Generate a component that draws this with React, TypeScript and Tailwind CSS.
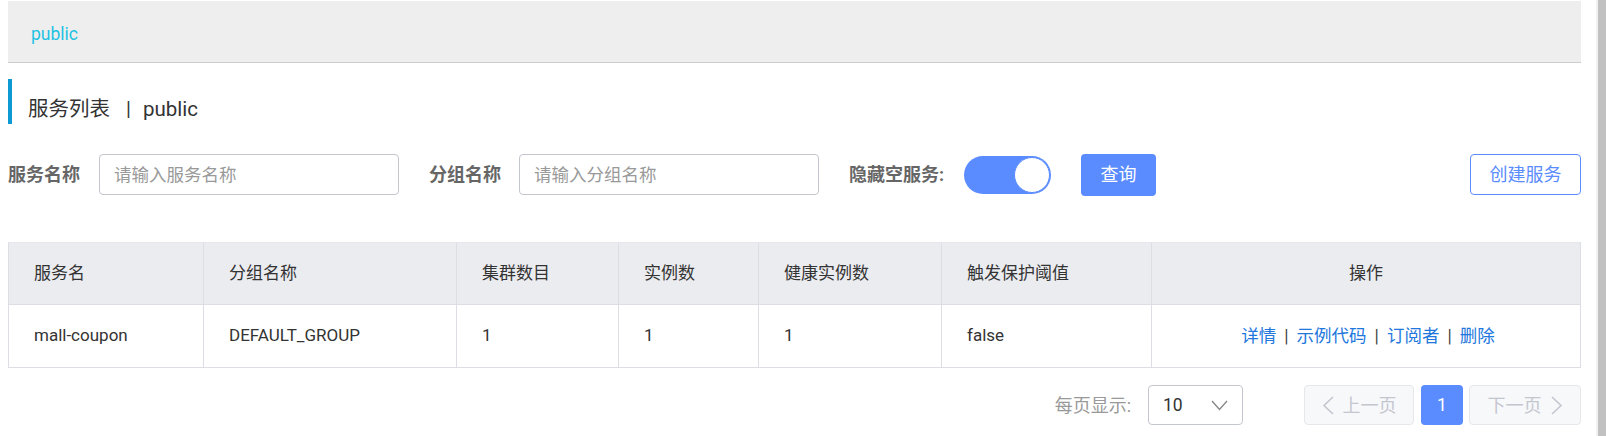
const font = { fontFamily: 'Roboto, "Noto Sans CJK SC", sans-serif' };

const columns = ["服务名", "分组名称", "集群数目", "实例数", "健康实例数", "触发保护阈值", "操作"];
const row = ["mall-coupon", "DEFAULT_GROUP", "1", "1", "1", "false"];

function Chevron({ dir }: { dir: "left" | "right" }) {
  return (
    <svg width="13" height="19" viewBox="0 0 13 19" fill="none">
      <polyline
        points={dir === "left" ? "11,1 2,9.5 11,18" : "2,1 11,9.5 2,18"}
        stroke="currentColor"
        strokeWidth="1.6"
      />
    </svg>
  );
}

export default function App() {
  return (
    <div className="flex w-[1606px] h-[436px] overflow-hidden bg-white text-[#333]" style={font}>
      <div className="flex-1 flex flex-col pl-[8px] pr-[15px]">
        <div className="mt-[1px] h-[62px] flex items-center pt-[6px] pl-[23px] bg-[#eeeeee] border-b border-[#cccccc]">
          <span className="text-[17.5px] text-[#1fc2e2]">public</span>
        </div>

        <div className="mt-[16px] h-[45px] flex items-center pt-[14px] pl-[16px] border-l-4 border-[#0e9bd3]">
          <span className="text-[20.5px] leading-[28px] text-[#333]">服务列表</span>
          <span className="ml-[16px] text-[20px] leading-[28px] text-[#333]">|</span>
          <span className="ml-[12px] text-[20.5px] leading-[28px] text-[#333]">public</span>
        </div>

        <div className="mt-[30px] h-[41px] flex items-center">
          <span className="text-[18px] font-bold text-[#666]">服务名称</span>
          <input
            placeholder="请输入服务名称"
            className="ml-[19px] h-[41px] w-[300px] px-[14px] text-[17.5px] border border-[#c4c6cf] rounded-[4px] placeholder:text-[#999] outline-none"
          />
          <span className="ml-[30px] text-[18px] font-bold text-[#666]">分组名称</span>
          <input
            placeholder="请输入分组名称"
            className="ml-[18px] h-[41px] w-[300px] px-[14px] text-[17.5px] border border-[#c4c6cf] rounded-[4px] placeholder:text-[#999] outline-none"
          />
          <span className="ml-[30px] text-[18px] font-bold text-[#666]">隐藏空服务:</span>
          <div className="ml-[20px] h-[38px] w-[87px] rounded-full bg-[#5a8cff] flex items-center justify-end pr-[1px]">
            <div className="h-[36px] w-[36px] rounded-full bg-white border border-[#5a8cff]" />
          </div>
          <button className="ml-[30px] h-[42px] w-[75px] rounded-[4px] bg-[#5a8cff] text-white text-[18px]">查询</button>
          <button className="ml-auto h-[41px] w-[111px] rounded-[4px] border border-[#5a8cff] text-[#5a8cff] text-[18px] bg-white">
            创建服务
          </button>
        </div>

        <div className="mt-[47px] border border-[#dcdee3] border-t-[#e6e7eb]">
          <div className="grid grid-cols-[195px_253px_162px_140px_183px_210px_1fr] h-[62px] bg-[#ebecf0] border-b border-[#dcdee3] text-[17px]">
            {columns.map((c, i) => (
              <div
                key={c}
                className={
                  i === 6
                    ? "flex items-center justify-center"
                    : "flex items-center pl-[25px] border-r border-[#dcdee3]"
                }
              >
                {c}
              </div>
            ))}
          </div>
          <div className="grid grid-cols-[195px_253px_162px_140px_183px_210px_1fr] h-[62px] text-[17px]">
            {row.map((c, i) => (
              <div key={i} className="flex items-center pl-[25px] border-r border-[#dcdee3]">
                {c}
              </div>
            ))}
            <div className="flex items-center justify-center gap-[8px] pl-[4px] text-[17.5px] text-[#2277dd]">
              <span>详情</span>
              <span className="text-[#444]">|</span>
              <span>示例代码</span>
              <span className="text-[#444]">|</span>
              <span>订阅者</span>
              <span className="text-[#444]">|</span>
              <span>删除</span>
            </div>
          </div>
        </div>

        <div className="mt-[17px] h-[40px] flex items-center justify-end">
          <span className="text-[18px] text-[#999]">每页显示:</span>
          <div className="ml-[17px] h-[40px] w-[95px] flex items-center justify-between pl-[14px] pr-[14px] border border-[#c4c6cf] rounded-[4px]">
            <span className="text-[17.5px] text-[#333]">10</span>
            <svg width="17" height="11" viewBox="0 0 17 11" fill="none">
              <polyline points="1,1 8.5,9.5 16,1" stroke="#888" strokeWidth="1.4" />
            </svg>
          </div>
          <button className="ml-[61px] h-[40px] w-[110px] flex items-center justify-center gap-[8px] rounded-[4px] border border-[#e6e7eb] bg-[#f7f8fa] text-[#c4c6cf] text-[18px]">
            <Chevron dir="left" />
            上一页
          </button>
          <button className="ml-[7px] h-[40px] w-[42px] rounded-[4px] bg-[#5a8cff] text-white text-[17.5px]">1</button>
          <button className="ml-[6px] h-[40px] w-[112px] flex items-center justify-center gap-[8px] rounded-[4px] border border-[#e6e7eb] bg-[#f7f8fa] text-[#c4c6cf] text-[18px]">
            下一页
            <Chevron dir="right" />
          </button>
        </div>
      </div>

      <div className="w-[10px] h-[436px] bg-[#f1f1f1] flex">
        <div className="ml-[2px] w-[8px] bg-[#c1c1c1]" />
      </div>
    </div>
  );
}
